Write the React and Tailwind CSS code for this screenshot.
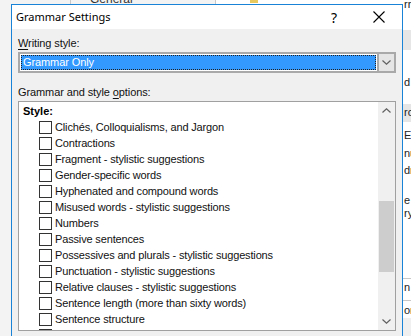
import React from "react";

const FONT = { fontFamily: '"Liberation Sans", Arial, sans-serif' };
const TITLE_FONT = { fontFamily: '"Noto Sans", "Open Sans", sans-serif' };

const styleOptions = [
  "Clichés, Colloquialisms, and Jargon",
  "Contractions",
  "Fragment - stylistic suggestions",
  "Gender-specific words",
  "Hyphenated and compound words",
  "Misused words - stylistic suggestions",
  "Numbers",
  "Passive sentences",
  "Possessives and plurals - stylistic suggestions",
  "Punctuation - stylistic suggestions",
  "Relative clauses - stylistic suggestions",
  "Sentence length (more than sixty words)",
  "Sentence structure",
  "Sentences beginning with And, But, and Hopefully",
];

// bits of the Word window peeking out to the right of the dialog
const behindRight = [
  { top: -4, text: "rr" },
  { top: 74, text: "d" },
  { top: 104, text: "ro" },
  { top: 127, text: "E" },
  { top: 145, text: "nu" },
  { top: 162, text: "dr" },
  { top: 192, text: "e" },
  { top: 205, text: "ry" },
  { top: 279, text: "n" },
  { top: 302, text: "or" },
];

function Chevron({ up }) {
  return (
    <svg width="9" height="5" viewBox="0 0 9 5" className="block">
      <path d={up ? "M0.5 4.5 L4.5 0.8 L8.5 4.5" : "M0.5 0.5 L4.5 4.2 L8.5 0.5"} fill="none" stroke="#606060" strokeWidth="1.2" />
    </svg>
  );
}

function CheckRow({ label }) {
  return (
    <div className="flex items-center h-[16px] pl-[16px] whitespace-nowrap">
      <span className="w-[13px] h-[13px] border border-[#333333] bg-white shrink-0" />
      <span className="ml-[3px] text-[11px] leading-[16px] tracking-[-0.15px] text-[#111]">{label}</span>
    </div>
  );
}

export default function App() {
  return (
    <div className="relative w-[411px] h-[336px] overflow-hidden bg-[#f3f3f3]" style={FONT}>
      {/* word window behind */}
      <div className="absolute left-[70px] top-0 w-[139px] h-[4px] border-l border-[#c8c8c8]" />
      <div className="absolute left-[90px] top-[-9px] text-[12px] leading-[16px] text-[#333]">General</div>
      <div className="absolute left-[215px] top-0 w-[196px] h-[4px] bg-white border-l border-[#c8c8c8]" />
      <div className="absolute left-[250px] top-[-2px] w-[8px] h-[5px] bg-[#e8c960]" />
      <div className="absolute left-[403px] top-0 w-[8px] h-[336px] bg-white overflow-hidden">
        <div className="absolute left-0 top-[30px] w-full h-[20px] bg-[#e6e6e6]" />
        <div className="absolute left-0 top-[104px] w-full h-[18px] bg-[#e6e6e6]" />
        <div className="absolute left-0 top-[278px] w-full border-t border-[#c8c8c8]" />
        <div className="absolute left-0 top-[300px] w-full border-t border-[#c8c8c8]" />
        <div className="absolute left-0 top-[318px] w-full h-[18px] bg-[#f0f0f0]" />
        {behindRight.map((b, i) => (
          <div key={i} className="absolute left-[1px] text-[11px] leading-[16px] text-[#222]" style={{ top: b.top }}>
            {b.text}
          </div>
        ))}
      </div>

      {/* dialog */}
      <div className="absolute left-[11px] top-[4px] w-[392px] h-[340px] border border-[#1883d7] bg-[#f0f0f0] flex flex-col">
        <div className="h-[24px] bg-white flex items-center shrink-0">
          <span className="pl-[4px] text-[11px] text-black" style={TITLE_FONT}>Grammar Settings</span>
          <span className="ml-auto text-[14px] text-black mr-[36px]" style={TITLE_FONT}>?</span>
          <svg width="12" height="12" viewBox="0 0 12 12" className="mr-[17px]">
            <path d="M0.5 0.5 L11.5 11.5 M11.5 0.5 L0.5 11.5" stroke="#000" strokeWidth="1.1" />
          </svg>
        </div>

        <div className="pl-[6px] pr-[6px]">
          <div className="mt-[6px] text-[11px] leading-[16px] tracking-[-0.1px] text-[#111]">
            <span className="underline underline-offset-2">W</span>riting style:
          </div>
          <div className="mt-[1px] h-[21px] w-[378px] border-2 border-[#a9a9a9] bg-white flex">
            <div className="flex-1 p-[1px]">
              <div className="h-full bg-[#3399ff] border border-dotted border-[#222] flex items-center pl-[1px] text-[11px] tracking-[-0.1px] text-white">
                Grammar Only
              </div>
            </div>
            <div className="w-[17px] border-l-2 border-[#a9a9a9] bg-[#e5e5e5] flex items-center justify-center">
              <Chevron />
            </div>
          </div>

          <div className="mt-[11px] text-[11px] leading-[16px] tracking-[-0.1px] text-[#111]">
            Grammar and style <span className="underline underline-offset-2">o</span>ptions:
          </div>
          <div className="mt-[1px] h-[230px] w-[378px] border border-[#a0a0a0] bg-white flex overflow-hidden">
            <div className="flex-1 pt-[1px] pl-[4px] overflow-hidden">
              <div className="h-[16px] text-[11px] leading-[16px] font-bold text-black">Style:</div>
              {styleOptions.map((o) => (
                <CheckRow key={o} label={o} />
              ))}
            </div>
            <div className="w-[17px] bg-[#f0f0f0] flex flex-col items-center">
              <div className="h-[17px] flex items-center justify-center">
                <Chevron up />
              </div>
              <div className="h-[82px]" />
              <div className="w-[15px] h-[71px] bg-[#cdcdcd]" />
              <div className="flex-1" />
              <div className="h-[17px] flex items-center justify-center">
                <Chevron />
              </div>
            </div>
          </div>
        </div>
      </div>
    </div>
  );
}
